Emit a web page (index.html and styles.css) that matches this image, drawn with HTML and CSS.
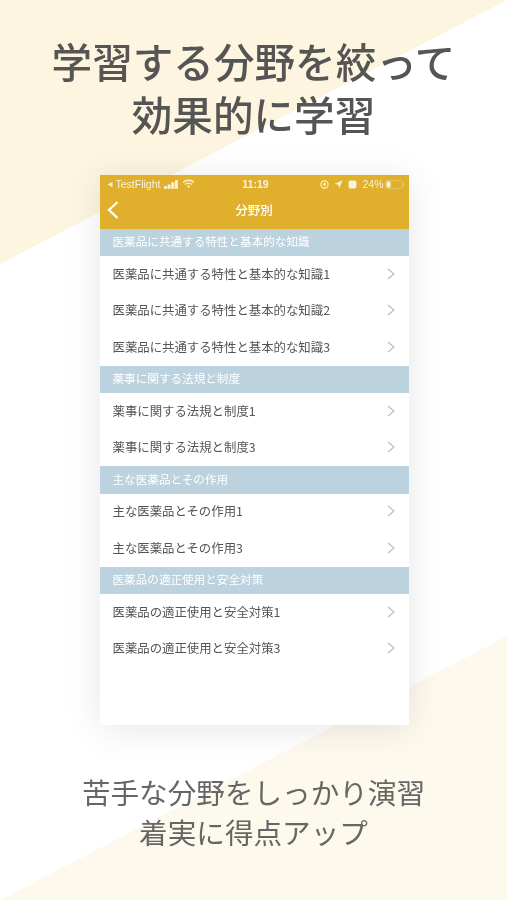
FILE: index.html
```html
<!DOCTYPE html>
<html lang="ja">
<head>
<meta charset="utf-8">
<title>分野別</title>
<link rel="stylesheet" href="styles.css">
</head>
<body>
<main class="shot">
  <h1 class="headline">学習する分野を絞って<br>効果的に学習</h1>
  <section class="phone">
    <header class="appbar">
      <div class="status">
        <div class="status-side">
          <svg class="ico-back" viewBox="0 0 6 6"><path d="M5.5 0.5v5L0.5 3z"/></svg>
          <span>TestFlight</span>
          <svg class="ico-signal" viewBox="0 0 14 8"><rect x="0" y="5.5" width="2.8" height="2.5"/><rect x="3.4" y="4" width="2.8" height="4"/><rect x="6.8" y="2" width="2.8" height="6"/><rect x="10.2" y="0" width="2.8" height="8"/></svg>
          <svg class="ico-wifi" viewBox="0 0 12 9"><path d="M1 3.2a7 7 0 0 1 10 0M2.8 5a4.5 4.5 0 0 1 6.4 0" fill="none" stroke="currentColor" stroke-width="1.3"/><path d="M4.500 6.400a2.200 2.200 0 0 1 3 0L6 8.200z"/></svg>
        </div>
        <span class="status-time">11:19</span>
        <div class="status-side status-right">
          <svg class="ico-lock" viewBox="0 0 8 8"><circle cx="4" cy="4" r="3.2" fill="none" stroke="currentColor"/><circle cx="4" cy="4" r="1.3"/></svg>
          <svg class="ico-loc" viewBox="0 0 8 8"><path d="M7.5 0.5L4.6 7.5 3.8 4.2 0.5 3.4z"/></svg>
          <svg class="ico-alarm" viewBox="0 0 8 8"><rect x="0.5" y="0.5" width="7" height="7" rx="1.5"/></svg>
          <span>24%</span>
          <svg class="ico-batt" viewBox="0 0 18 8"><rect x="0.4" y="0.4" width="15.2" height="7.2" rx="1.8" fill="none" stroke="currentColor" stroke-opacity=".35" stroke-width=".8"/><rect x="1.4" y="1.4" width="3.6" height="5.2" rx=".8"/><rect x="16.4" y="2.6" width="1.2" height="2.8" rx=".6" opacity=".35"/></svg>
        </div>
      </div>
      <div class="nav">
        <svg class="ico-nav-back" viewBox="0 0 12 18"><path d="M10.5 1L2 9l8.500 8" fill="none" stroke="currentColor" stroke-width="2.200"/></svg>
        <h2 class="nav-title">分野別</h2>
      </div>
    </header>

    <h3 class="group">医薬品に共通する特性と基本的な知識</h3>
    <ul class="rows">
      <li class="row"><span>医薬品に共通する特性と基本的な知識1</span><svg class="chev" viewBox="0 0 8 12"><path d="M1 1l6 5-6 5"/></svg></li>
      <li class="row"><span>医薬品に共通する特性と基本的な知識2</span><svg class="chev" viewBox="0 0 8 12"><path d="M1 1l6 5-6 5"/></svg></li>
      <li class="row"><span>医薬品に共通する特性と基本的な知識3</span><svg class="chev" viewBox="0 0 8 12"><path d="M1 1l6 5-6 5"/></svg></li>
    </ul>

    <h3 class="group">薬事に関する法規と制度</h3>
    <ul class="rows">
      <li class="row"><span>薬事に関する法規と制度1</span><svg class="chev" viewBox="0 0 8 12"><path d="M1 1l6 5-6 5"/></svg></li>
      <li class="row"><span>薬事に関する法規と制度3</span><svg class="chev" viewBox="0 0 8 12"><path d="M1 1l6 5-6 5"/></svg></li>
    </ul>

    <h3 class="group">主な医薬品とその作用</h3>
    <ul class="rows">
      <li class="row"><span>主な医薬品とその作用1</span><svg class="chev" viewBox="0 0 8 12"><path d="M1 1l6 5-6 5"/></svg></li>
      <li class="row"><span>主な医薬品とその作用3</span><svg class="chev" viewBox="0 0 8 12"><path d="M1 1l6 5-6 5"/></svg></li>
    </ul>

    <h3 class="group">医薬品の適正使用と安全対策</h3>
    <ul class="rows">
      <li class="row"><span>医薬品の適正使用と安全対策1</span><svg class="chev" viewBox="0 0 8 12"><path d="M1 1l6 5-6 5"/></svg></li>
      <li class="row"><span>医薬品の適正使用と安全対策3</span><svg class="chev" viewBox="0 0 8 12"><path d="M1 1l6 5-6 5"/></svg></li>
    </ul>
  </section>
  <p class="tagline">苦手な分野をしっかり演習<br>着実に得点アップ</p>
</main>
</body>
</html>
```
FILE: styles.css
```css
* { box-sizing: border-box; }
html, body { margin: 0; padding: 0; }
body {
  width: 507px;
  height: 900px;
  overflow: hidden;
  background: #fff;
  font-family: "Noto Sans CJK JP", "Noto Sans", sans-serif;
}
.shot {
  width: 507px;
  height: 900px;
  padding-top: 34px;
  display: flex;
  flex-direction: column;
  align-items: center;
  filter: blur(.3px);
  background-color: #fff;
  background-image:
    linear-gradient(to bottom right, #fdf5df 50%, transparent 50%),
    linear-gradient(to bottom right, transparent 50%, #fdf9ed 50%);
  background-repeat: no-repeat;
  background-size: 507px 264px, 507px 264px;
  background-position: 0 0, 0 636px;
}
.headline {
  margin: 0;
  font-size: 40.600px;
  line-height: 53px;
  font-weight: 500;
  color: #555;
  text-align: center;
}
.phone {
  width: 309px;
  height: 550px;
  margin: 35px 0 0 1px;
  background: #fff;
  box-shadow: 0 4px 34px rgba(0, 0, 0, .1);
}
.appbar { background: #e0b02c; color: #fff; height: 53.500px; }
.appbar svg { fill: currentColor; display: block; }
.status {
  height: 18px;
  padding: 0 4px 0 7px;
  display: grid;
  grid-template-columns: 1fr auto 1fr;
  align-items: center;
  font-family: "Liberation Sans", sans-serif;
  font-size: 10.500px;
  color: rgba(255, 255, 255, .82);
}
.status-side { display: flex; align-items: center; gap: 3px; }
.status-right { justify-content: flex-end; gap: 5px; }
.status-time { font-size: 10.500px; font-weight: 700; }
.ico-back { width: 6px; height: 7px; }
.ico-signal { width: 15px; height: 9px; margin-left: 1px; }
.ico-wifi { width: 13px; height: 10px; }
.ico-lock, .ico-loc, .ico-alarm { width: 9px; height: 9px; }
.ico-batt { width: 20px; height: 9px; margin-left: -4px; }
.nav {
  height: 35.500px;
  display: flex;
  align-items: center;
  justify-content: center;
  position: relative;
}
.ico-nav-back { position: absolute; left: 7px; top: 8px; width: 12px; height: 18px; }
.nav-title {
  margin: 0;
  font-size: 12.500px;
  line-height: 1;
  font-weight: 500;
  color: #fff;
  transform: translateY(-1px);
}
.group {
  margin: 0;
  height: 27.500px;
  padding: 0 0 2px 13px;
  display: flex;
  align-items: center;
  background: #bcd3df;
  color: #fff;
  font-size: 11.600px;
  font-weight: 400;
}
.rows { margin: 0; padding: 0; list-style: none; }
.row {
  height: 36.500px;
  padding: 0 14px 1px 13px;
  display: flex;
  align-items: center;
  justify-content: space-between;
  color: #555;
  font-size: 12.400px;
}
.chev { width: 8px; height: 12px; fill: none; stroke: #bbb; stroke-width: 1.100; }
.tagline {
  margin: 47px 0 0;
  font-size: 28.600px;
  line-height: 40px;
  color: #666;
  text-align: center;
}
```
